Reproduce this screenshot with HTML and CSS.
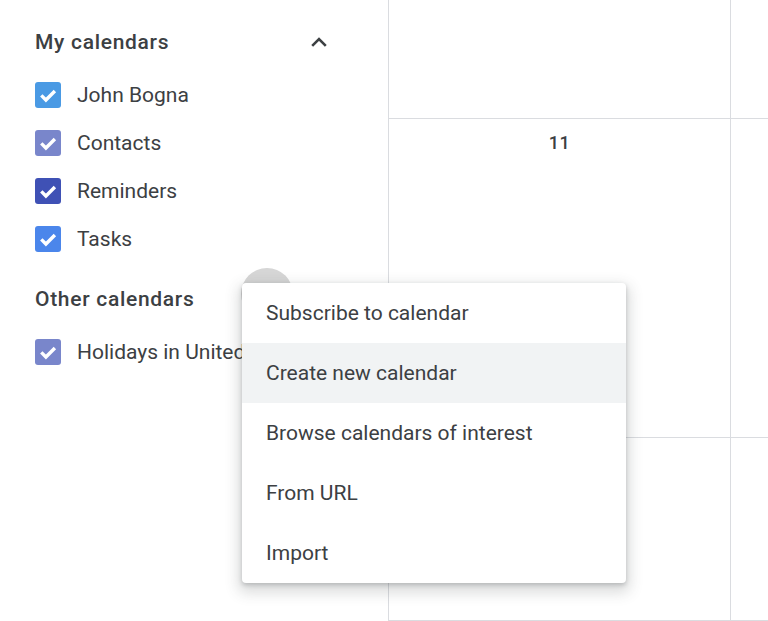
FILE: index.html
```html
<!DOCTYPE html>
<html>
<head>
<meta charset="utf-8">
<link rel="stylesheet" href="styles.css">
</head>
<body>
<div class="page">
  <aside class="sidebar">
    <section class="group">
      <div class="group-head">
        <span class="group-title">My calendars</span>
        <svg class="chevron" width="24" height="24" viewBox="0 0 24 24"><path d="M5.2 15.8 12 9l6.8 6.8" fill="none" stroke="#3c4043" stroke-width="2.6"/></svg>
      </div>
      <div class="cal"><span class="box c-blue"><svg viewBox="0 0 26 26"><path d="M6.3 13.4l4.6 4.6 9-9" fill="none" stroke="#fff" stroke-width="3.4"/></svg></span><span class="cal-name">John Bogna</span></div>
      <div class="cal"><span class="box c-lav"><svg viewBox="0 0 26 26"><path d="M6.3 13.4l4.6 4.6 9-9" fill="none" stroke="#fff" stroke-width="3.4"/></svg></span><span class="cal-name">Contacts</span></div>
      <div class="cal"><span class="box c-indigo"><svg viewBox="0 0 26 26"><path d="M6.3 13.4l4.6 4.6 9-9" fill="none" stroke="#fff" stroke-width="3.4"/></svg></span><span class="cal-name">Reminders</span></div>
      <div class="cal"><span class="box c-task"><svg viewBox="0 0 26 26"><path d="M6.3 13.4l4.6 4.6 9-9" fill="none" stroke="#fff" stroke-width="3.4"/></svg></span><span class="cal-name">Tasks</span></div>
    </section>
    <section class="group group-other">
      <div class="group-head">
        <span class="group-title">Other calendars</span>
      </div>
      <div class="cal"><span class="box c-lav"><svg viewBox="0 0 26 26"><path d="M6.3 13.4l4.6 4.6 9-9" fill="none" stroke="#fff" stroke-width="3.4"/></svg></span><span class="cal-name">Holidays in United States</span></div>
    </section>
    <span class="add-btn"></span>
  </aside>
  <main class="grid">
    <div class="cell"></div>
    <div class="cell"></div>
    <div class="cell"><span class="day">11</span></div>
    <div class="cell"></div>
    <div class="cell"></div>
    <div class="cell"></div>
  </main>
  <ul class="menu">
    <li class="menu-item">Subscribe to calendar</li>
    <li class="menu-item active">Create new calendar</li>
    <li class="menu-item">Browse calendars of interest</li>
    <li class="menu-item">From URL</li>
    <li class="menu-item">Import</li>
  </ul>
</div>
</body>
</html>
```
FILE: styles.css
```css
html, body {
  margin: 0;
  padding: 0;
  background: #fff;
}
body {
  font-family: Roboto, "Liberation Sans", Arial, sans-serif;
  color: #3c4043;
}
.page {
  position: relative;
  display: flex;
  width: 768px;
  height: 621px;
  overflow: hidden;
}
.sidebar {
  position: relative;
  width: 389px;
  flex: 0 0 389px;
  padding-top: 13px;
  box-sizing: border-box;
  overflow: hidden;
  white-space: nowrap;
}
.group-head {
  height: 58px;
  display: flex;
  align-items: center;
  justify-content: space-between;
  padding-left: 35px;
  padding-right: 58px;
}
.group-title {
  font-size: 21px;
  font-weight: 500;
  letter-spacing: 0.7px;
  color: #3c4043;
}
.chevron {
  display: block;
}
.group-other {
  margin-top: 7px;
}
.cal {
  height: 48px;
  display: flex;
  align-items: center;
  padding-left: 35px;
}
.box {
  width: 26px;
  height: 26px;
  border-radius: 3px;
  display: block;
  flex: 0 0 26px;
}
.box svg {
  display: block;
  width: 26px;
  height: 26px;
}
.c-blue { background: #4a9ae4; }
.c-lav { background: #7986cb; }
.c-indigo { background: #3f51b5; }
.c-task { background: #4b86eb; }
.cal-name {
  margin-left: 16px;
  font-size: 21px;
  color: #3c4043;
}
.add-btn {
  position: absolute;
  left: 241px;
  top: 268px;
  width: 52px;
  height: 52px;
  border-radius: 50%;
  background: #d6d6d6;
}
.grid {
  flex: 1;
  display: grid;
  grid-template-columns: 342px 1fr;
  grid-template-rows: 119px 319px 1fr;
  border-left: 1px solid #dadce0;
  margin-left: -1px;
}
.cell {
  border-right: 1px solid #dadce0;
  border-bottom: 1px solid #dadce0;
  display: flex;
  justify-content: center;
  padding-top: 13px;
  box-sizing: border-box;
}
.cell:nth-child(even) {
  border-right: none;
}
.day {
  font-size: 18px;
  font-weight: 500;
  color: #3c4043;
  letter-spacing: 0.5px;
}
.menu {
  position: absolute;
  left: 242px;
  top: 283px;
  width: 384px;
  margin: 0;
  padding: 0;
  list-style: none;
  background: #fff;
  border-radius: 4px;
  box-shadow: 0 2px 4px rgba(60, 64, 67, 0.25), 0 6px 14px 4px rgba(60, 64, 67, 0.18);
}
.menu-item {
  height: 60px;
  display: flex;
  align-items: center;
  padding-left: 24px;
  font-size: 21px;
  color: #3c4043;
}
.menu-item.active {
  background: #f1f3f4;
}
```
